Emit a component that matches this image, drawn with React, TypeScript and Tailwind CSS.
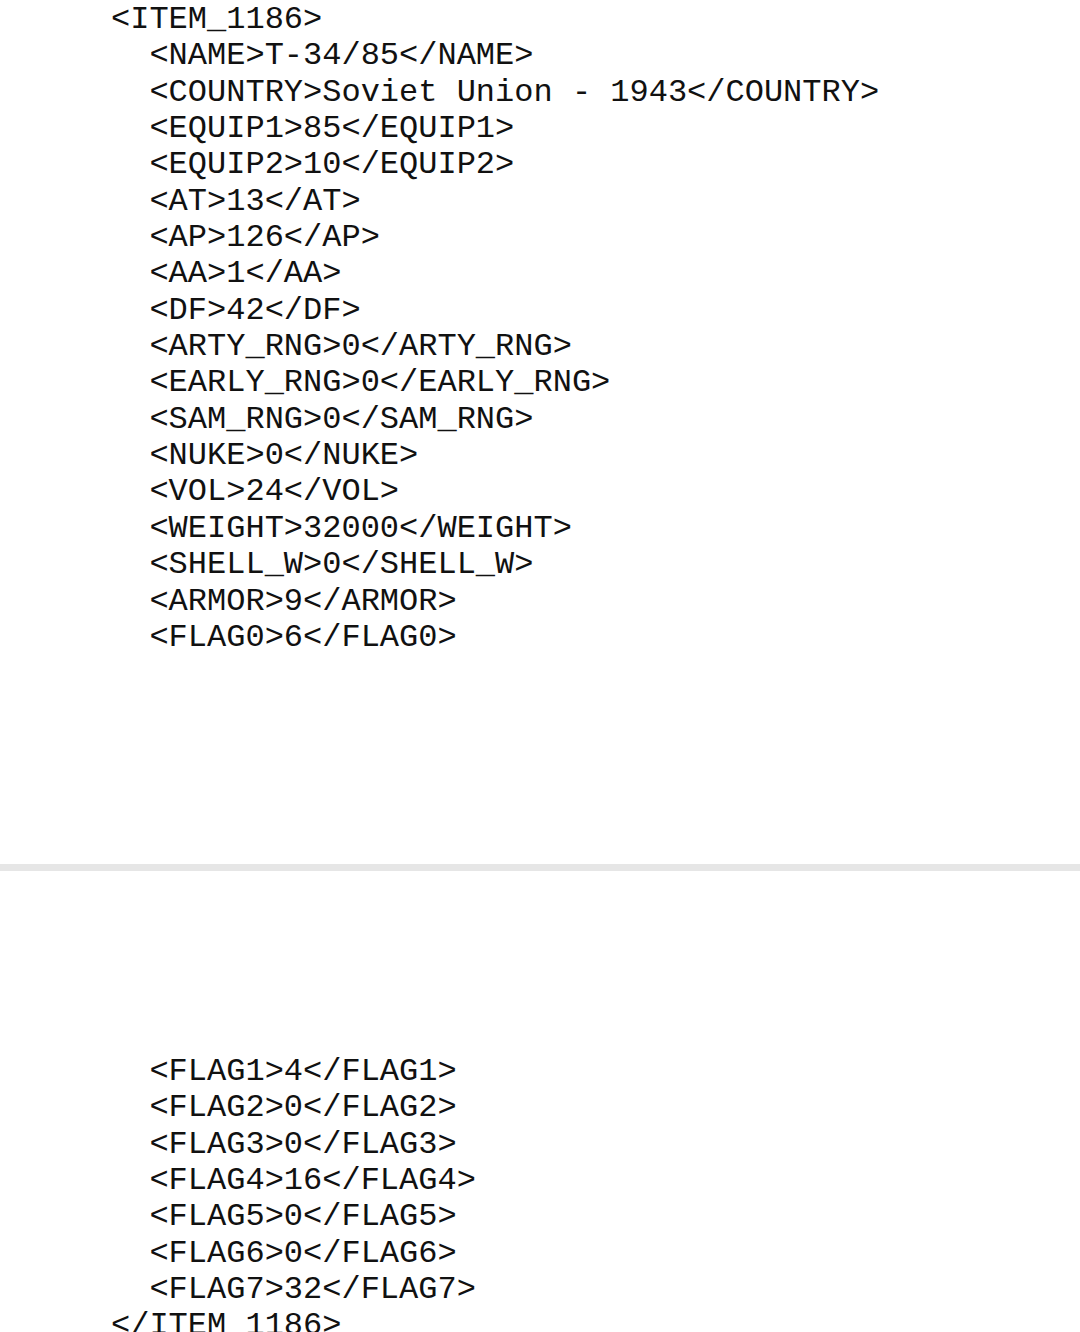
const pageOne = [
  '<ITEM_1186>',
  '  <NAME>T-34/85</NAME>',
  '  <COUNTRY>Soviet Union - 1943</COUNTRY>',
  '  <EQUIP1>85</EQUIP1>',
  '  <EQUIP2>10</EQUIP2>',
  '  <AT>13</AT>',
  '  <AP>126</AP>',
  '  <AA>1</AA>',
  '  <DF>42</DF>',
  '  <ARTY_RNG>0</ARTY_RNG>',
  '  <EARLY_RNG>0</EARLY_RNG>',
  '  <SAM_RNG>0</SAM_RNG>',
  '  <NUKE>0</NUKE>',
  '  <VOL>24</VOL>',
  '  <WEIGHT>32000</WEIGHT>',
  '  <SHELL_W>0</SHELL_W>',
  '  <ARMOR>9</ARMOR>',
  '  <FLAG0>6</FLAG0>',
];

const pageTwo = [
  '  <FLAG1>4</FLAG1>',
  '  <FLAG2>0</FLAG2>',
  '  <FLAG3>0</FLAG3>',
  '  <FLAG4>16</FLAG4>',
  '  <FLAG5>0</FLAG5>',
  '  <FLAG6>0</FLAG6>',
  '  <FLAG7>32</FLAG7>',
  '</ITEM_1186>',
];

function Lines({ lines }: { lines: string[] }) {
  return (
    <pre className="font-['Liberation_Mono',monospace] text-[32px] leading-[36.35px] text-[#111] whitespace-pre">
      {lines.map((l, i) => (
        <div key={i}>{l}</div>
      ))}
    </pre>
  );
}

export default function App() {
  return (
    <div className="w-[1080px] h-[1332px] overflow-hidden bg-white flex flex-col">
      <div className="h-[864px] shrink-0 pl-[111px] pt-[2px] overflow-hidden">
        <Lines lines={pageOne} />
      </div>
      <div className="h-[7px] shrink-0 bg-[#e6e6e6]" />
      <div className="flex-1 pl-[111px] pt-[183px] overflow-hidden">
        <Lines lines={pageTwo} />
      </div>
    </div>
  );
}
